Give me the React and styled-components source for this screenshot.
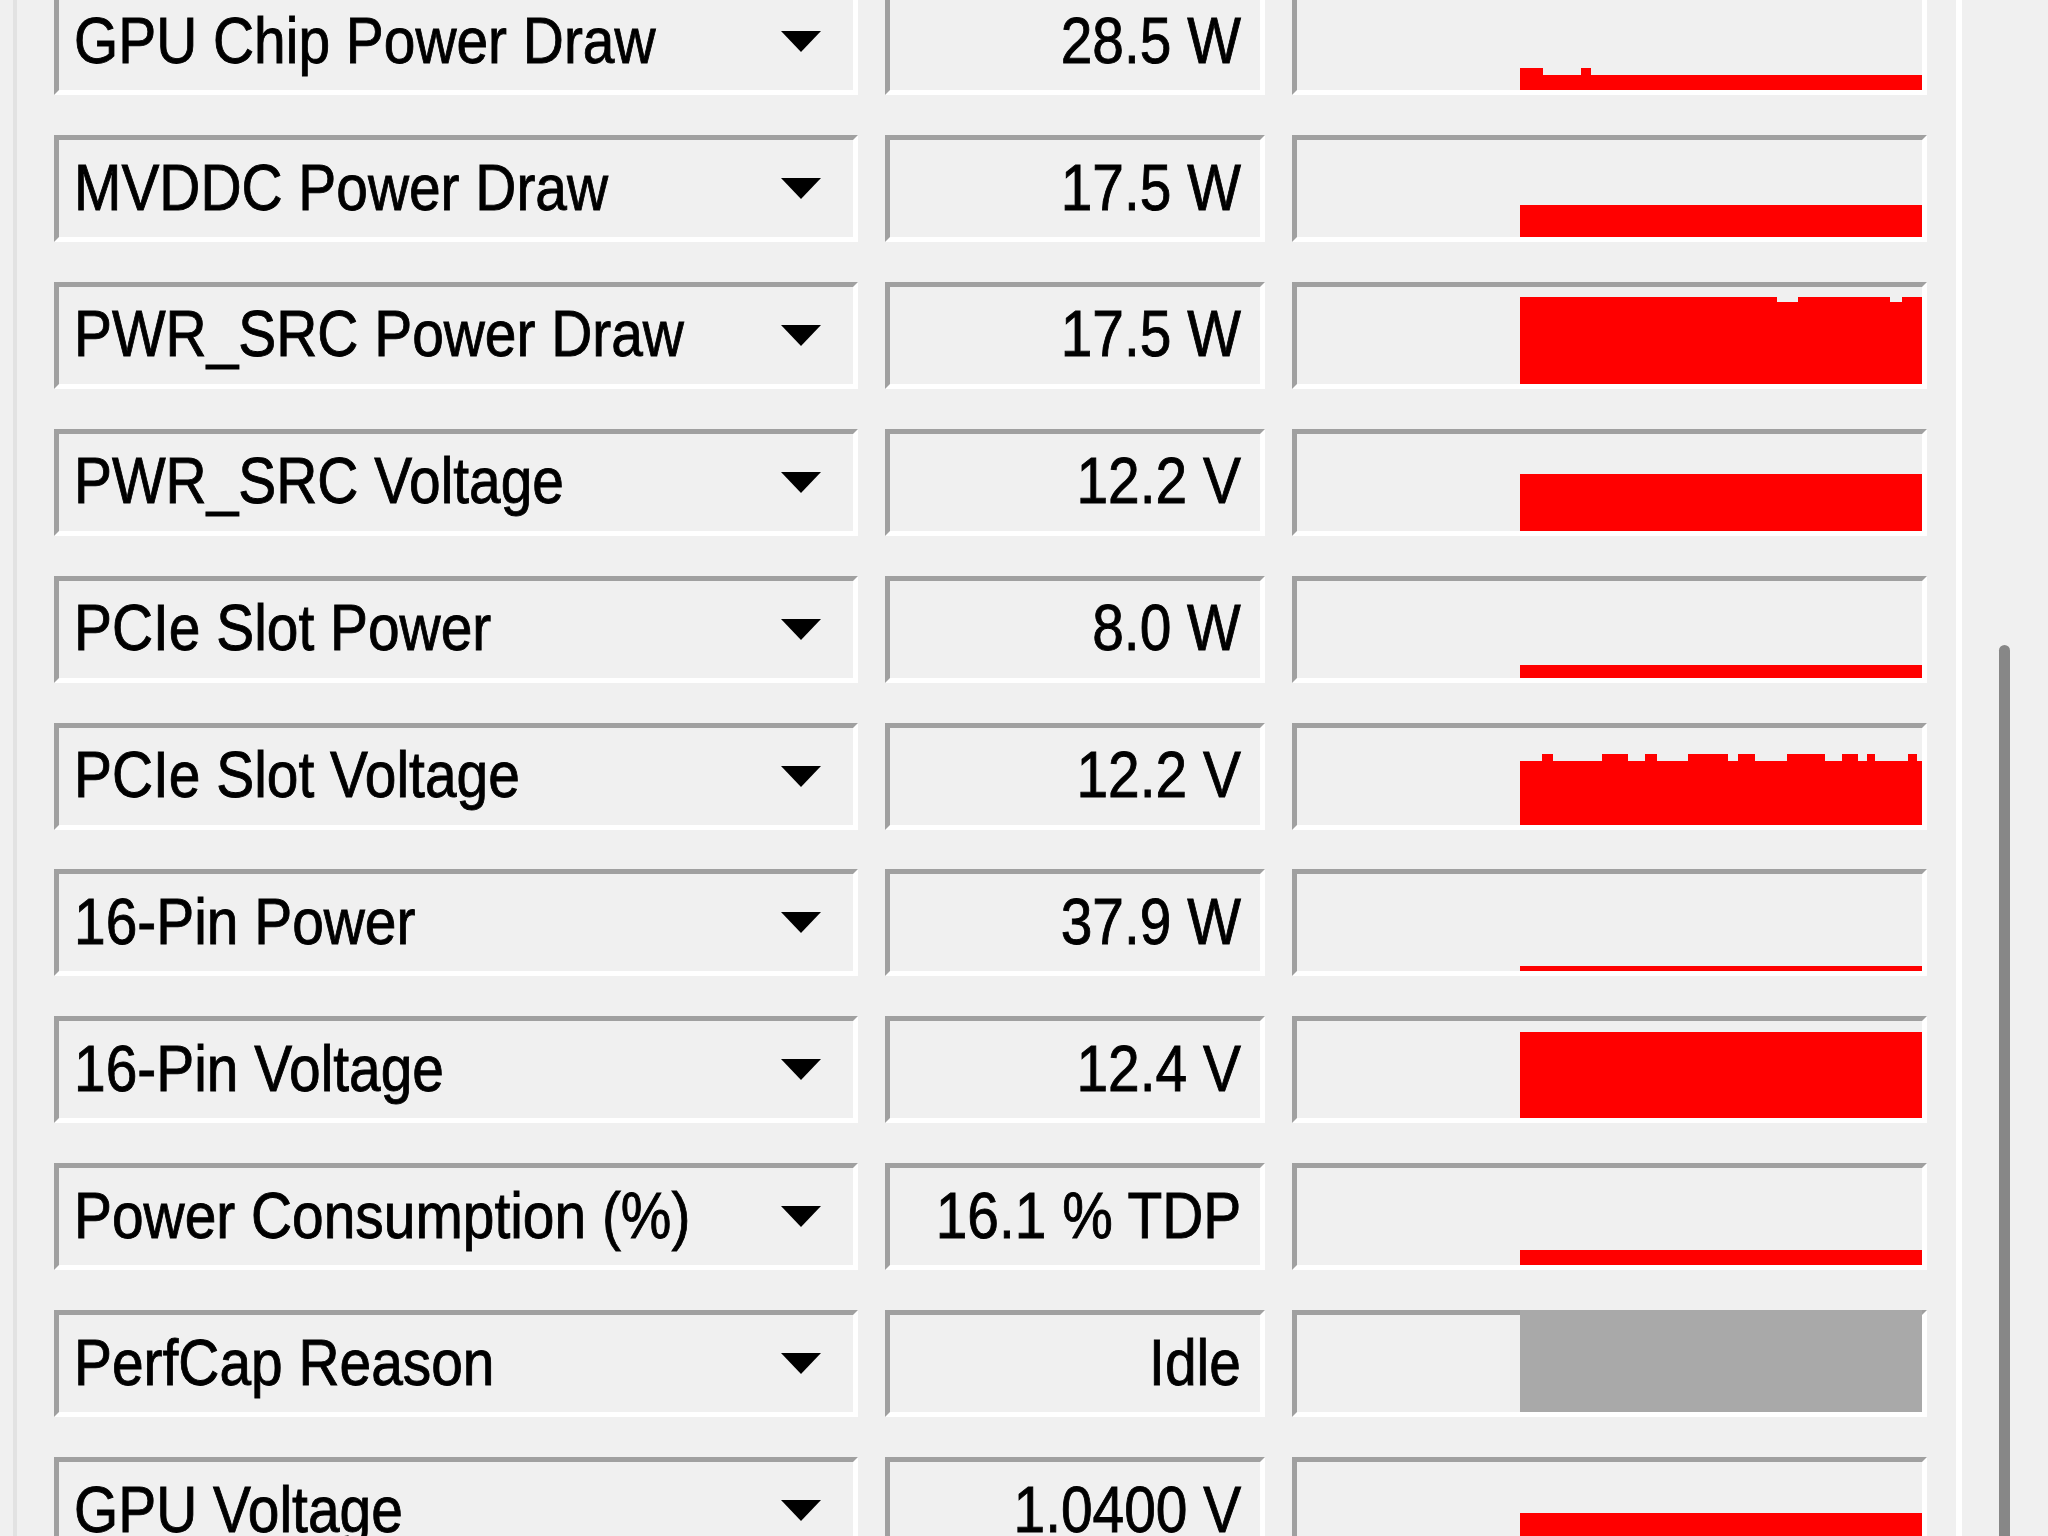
import React from 'react';
import styled, { createGlobalStyle, css } from 'styled-components';

const GlobalStyle = createGlobalStyle`
  html, body {
    margin: 0;
    padding: 0;
    background: #f0f0f0;
    overflow: hidden;
  }
  #root {
    height: 1536px;
  }
`;

// graph geometry (inner area of the graph cell)
const GRAPH_W = 625;
const GRAPH_H = 97;
const GRAPH_LEFT = 1297; // page x of the graph's inner left edge
const HISTORY_START = 1520; // page x where recorded history begins

const sensors = [
  { name: 'GPU Chip Power Draw', value: '28.5 W', base: 15, segs: [[1520, 1543, 22], [1581, 1591, 22]] },
  { name: 'MVDDC Power Draw', value: '17.5 W', base: 32 },
  { name: 'PWR_SRC Power Draw', value: '17.5 W', base: 87, segs: [[1777, 1798, 82], [1890, 1902, 82]] },
  { name: 'PWR_SRC Voltage', value: '12.2 V', base: 57 },
  { name: 'PCIe Slot Power', value: '8.0 W', base: 13 },
  {
    name: 'PCIe Slot Voltage',
    value: '12.2 V',
    base: 64,
    segs: [
      [1542, 1553, 71], [1602, 1628, 71], [1645, 1657, 71], [1688, 1728, 71],
      [1738, 1755, 71], [1787, 1825, 71], [1842, 1858, 71], [1867, 1875, 71],
      [1908, 1917, 71],
    ],
  },
  { name: '16-Pin Power', value: '37.9 W', base: 5 },
  { name: '16-Pin Voltage', value: '12.4 V', base: 86 },
  { name: 'Power Consumption (%)', value: '16.1 % TDP', base: 15 },
  { name: 'PerfCap Reason', value: 'Idle', idle: true },
  { name: 'GPU Voltage', value: '1.0400 V', base: 46 },
];

const sunken = css`
  box-sizing: border-box;
  height: 107px;
  background: #f0f0f0;
  border-style: solid;
  border-width: 5px;
  border-color: #a0a0a0 #ffffff #ffffff #a0a0a0;
`;

const Window = styled.div`
  display: flex;
  height: 1536px;
  padding-left: 13px;
  font-family: "Liberation Sans", Arial, sans-serif;
  color: #000;
`;

const SensorPanel = styled.div`
  box-sizing: border-box;
  width: 1949px;
  height: 100%;
  border-left: 4px solid #e2e2e2;
  border-right: 6px solid #ffffff;
  padding: 0 29px 0 37px;
`;

const SensorList = styled.div`
  display: flex;
  flex-direction: column;
  gap: 39.9px;
  margin-top: -11.9px;
`;

const SensorRow = styled.div`
  display: grid;
  grid-template-columns: 804px 380px 635px;
  column-gap: 27px;
`;

const NameBox = styled.div`
  ${sunken};
  display: flex;
  align-items: center;
  justify-content: space-between;
  padding: 0 31px 0 15px;
`;

const ValueBox = styled.div`
  ${sunken};
  display: flex;
  align-items: center;
  justify-content: flex-end;
  padding: 0 19px 0 10px;
`;

const GraphBox = styled.div`
  ${sunken};
  svg {
    display: block;
    width: 100%;
    height: 100%;
    overflow: visible;
  }
`;

const Label = styled.span`
  display: inline-block;
  font-size: 65px;
  line-height: 1;
  white-space: nowrap;
  margin-bottom: 3px;
  -webkit-text-stroke: 0.9px #000;
  transform: scaleX(0.875);
  transform-origin: ${p => (p.$right ? 'right' : 'left')} center;
`;

const ScrollArea = styled.div`
  flex: 1;
  padding-left: 37px;
`;

const ScrollThumb = styled.div`
  width: 11px;
  margin-top: 645px;
  height: 900px;
  background: #878787;
  border-radius: 6px 6px 0 0;
`;

const DropArrow = () => (
  <svg width="42" height="23" viewBox="0 0 42 23">
    <polygon points="1,1 41,1 21,22" fill="#000" />
  </svg>
);

const stepPath = (base, segs = []) => {
  const x0 = HISTORY_START - GRAPH_LEFT;
  const y = h => GRAPH_H - h;
  let d = `M${x0} ${GRAPH_H} L${x0} ${y(base)}`;
  segs.forEach(([a, b, h]) => {
    const xa = a - GRAPH_LEFT;
    const xb = b - GRAPH_LEFT;
    d += ` L${xa} ${y(base)} L${xa} ${y(h)} L${xb} ${y(h)} L${xb} ${y(base)}`;
  });
  d += ` L${GRAPH_W} ${y(base)} L${GRAPH_W} ${GRAPH_H} Z`;
  return d;
};

const Graph = ({ sensor }) => {
  const x0 = HISTORY_START - GRAPH_LEFT;
  return (
    <svg viewBox={`0 0 ${GRAPH_W} ${GRAPH_H}`} preserveAspectRatio="none">
      {sensor.idle ? (
        <rect x={x0} y={-5} width={GRAPH_W - x0} height={GRAPH_H + 5} fill="#a9a9a9" />
      ) : (
        <path d={stepPath(sensor.base, sensor.segs)} fill="#ff0000" />
      )}
    </svg>
  );
};

export default function App() {
  return (
    <>
      <GlobalStyle />
      <Window>
        <SensorPanel>
          <SensorList>
            {sensors.map(s => (
              <SensorRow key={s.name}>
                <NameBox>
                  <Label>{s.name}</Label>
                  <DropArrow />
                </NameBox>
                <ValueBox>
                  <Label $right>{s.value}</Label>
                </ValueBox>
                <GraphBox>
                  <Graph sensor={s} />
                </GraphBox>
              </SensorRow>
            ))}
          </SensorList>
        </SensorPanel>
        <ScrollArea>
          <ScrollThumb />
        </ScrollArea>
      </Window>
    </>
  );
}
